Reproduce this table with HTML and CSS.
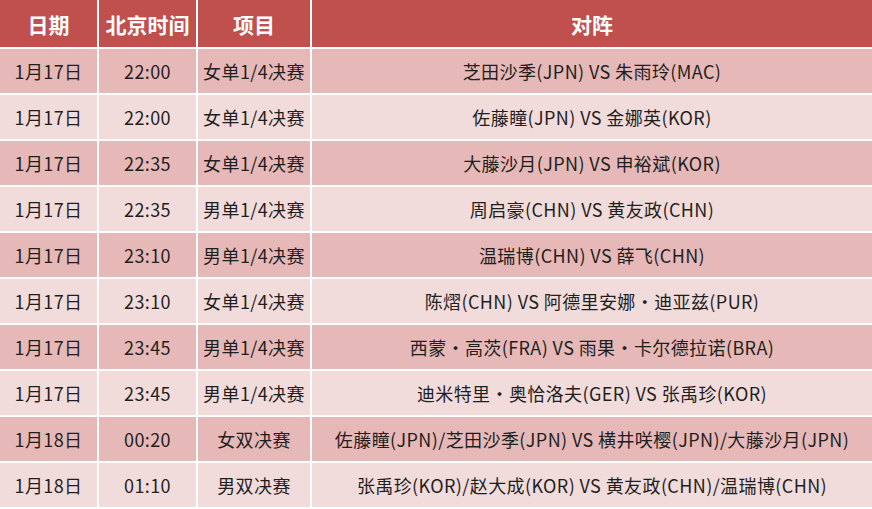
FILE: index.html
```html
<!DOCTYPE html>
<html lang="zh">
<head>
<meta charset="utf-8">
<link rel="stylesheet" href="styles.css">
</head>
<body>
<div class="table">
  <div class="cell head">日期</div>
  <div class="cell head">北京时间</div>
  <div class="cell head">项目</div>
  <div class="cell head">对阵</div>

  <div class="cell odd">1月17日</div><div class="cell odd">22:00</div><div class="cell odd">女单1/4决赛</div><div class="cell odd">芝田沙季(JPN) VS 朱雨玲(MAC)</div>
  <div class="cell even">1月17日</div><div class="cell even">22:00</div><div class="cell even">女单1/4决赛</div><div class="cell even">佐藤瞳(JPN) VS 金娜英(KOR)</div>
  <div class="cell odd">1月17日</div><div class="cell odd">22:35</div><div class="cell odd">女单1/4决赛</div><div class="cell odd">大藤沙月(JPN) VS 申裕斌(KOR)</div>
  <div class="cell even">1月17日</div><div class="cell even">22:35</div><div class="cell even">男单1/4决赛</div><div class="cell even">周启豪(CHN) VS 黄友政(CHN)</div>
  <div class="cell odd">1月17日</div><div class="cell odd">23:10</div><div class="cell odd">男单1/4决赛</div><div class="cell odd">温瑞博(CHN) VS 薛飞(CHN)</div>
  <div class="cell even">1月17日</div><div class="cell even">23:10</div><div class="cell even">女单1/4决赛</div><div class="cell even">陈熠(CHN) VS 阿德里安娜・迪亚兹(PUR)</div>
  <div class="cell odd">1月17日</div><div class="cell odd">23:45</div><div class="cell odd">男单1/4决赛</div><div class="cell odd">西蒙・高茨(FRA) VS 雨果・卡尔德拉诺(BRA)</div>
  <div class="cell even">1月17日</div><div class="cell even">23:45</div><div class="cell even">男单1/4决赛</div><div class="cell even">迪米特里・奥恰洛夫(GER) VS 张禹珍(KOR)</div>
  <div class="cell odd">1月18日</div><div class="cell odd">00:20</div><div class="cell odd">女双决赛</div><div class="cell odd">佐藤瞳(JPN)/芝田沙季(JPN) VS 横井咲樱(JPN)/大藤沙月(JPN)</div>
  <div class="cell even">1月18日</div><div class="cell even">01:10</div><div class="cell even">男双决赛</div><div class="cell even">张禹珍(KOR)/赵大成(KOR) VS 黄友政(CHN)/温瑞博(CHN)</div>
</div>
</body>
</html>
```

FILE: styles.css
```css
html, body {
  margin: 0;
  padding: 0;
  background: #ffffff;
}
body {
  width: 872px;
  height: 509px;
  overflow: hidden;
  font-family: "Noto Sans CJK SC", "Noto Sans", sans-serif;
}
.table {
  display: grid;
  grid-template-columns: 97px 97px 112px 560px;
  grid-template-rows: 47px repeat(10, 44px);
  column-gap: 2px;
  row-gap: 2px;
  padding-bottom: 2px;
  background: #ffffff;
}
.cell {
  display: flex;
  align-items: center;
  justify-content: center;
  white-space: nowrap;
  font-size: 18px;
  color: #1f1f1f;
  letter-spacing: 0.4px;
}
.head {
  background: #c0504d;
  color: #ffffff;
  font-weight: bold;
  font-size: 21px;
  letter-spacing: 0;
}
.odd {
  background: #e6b8b7;
}
.even {
  background: #f2dcdb;
}
```
